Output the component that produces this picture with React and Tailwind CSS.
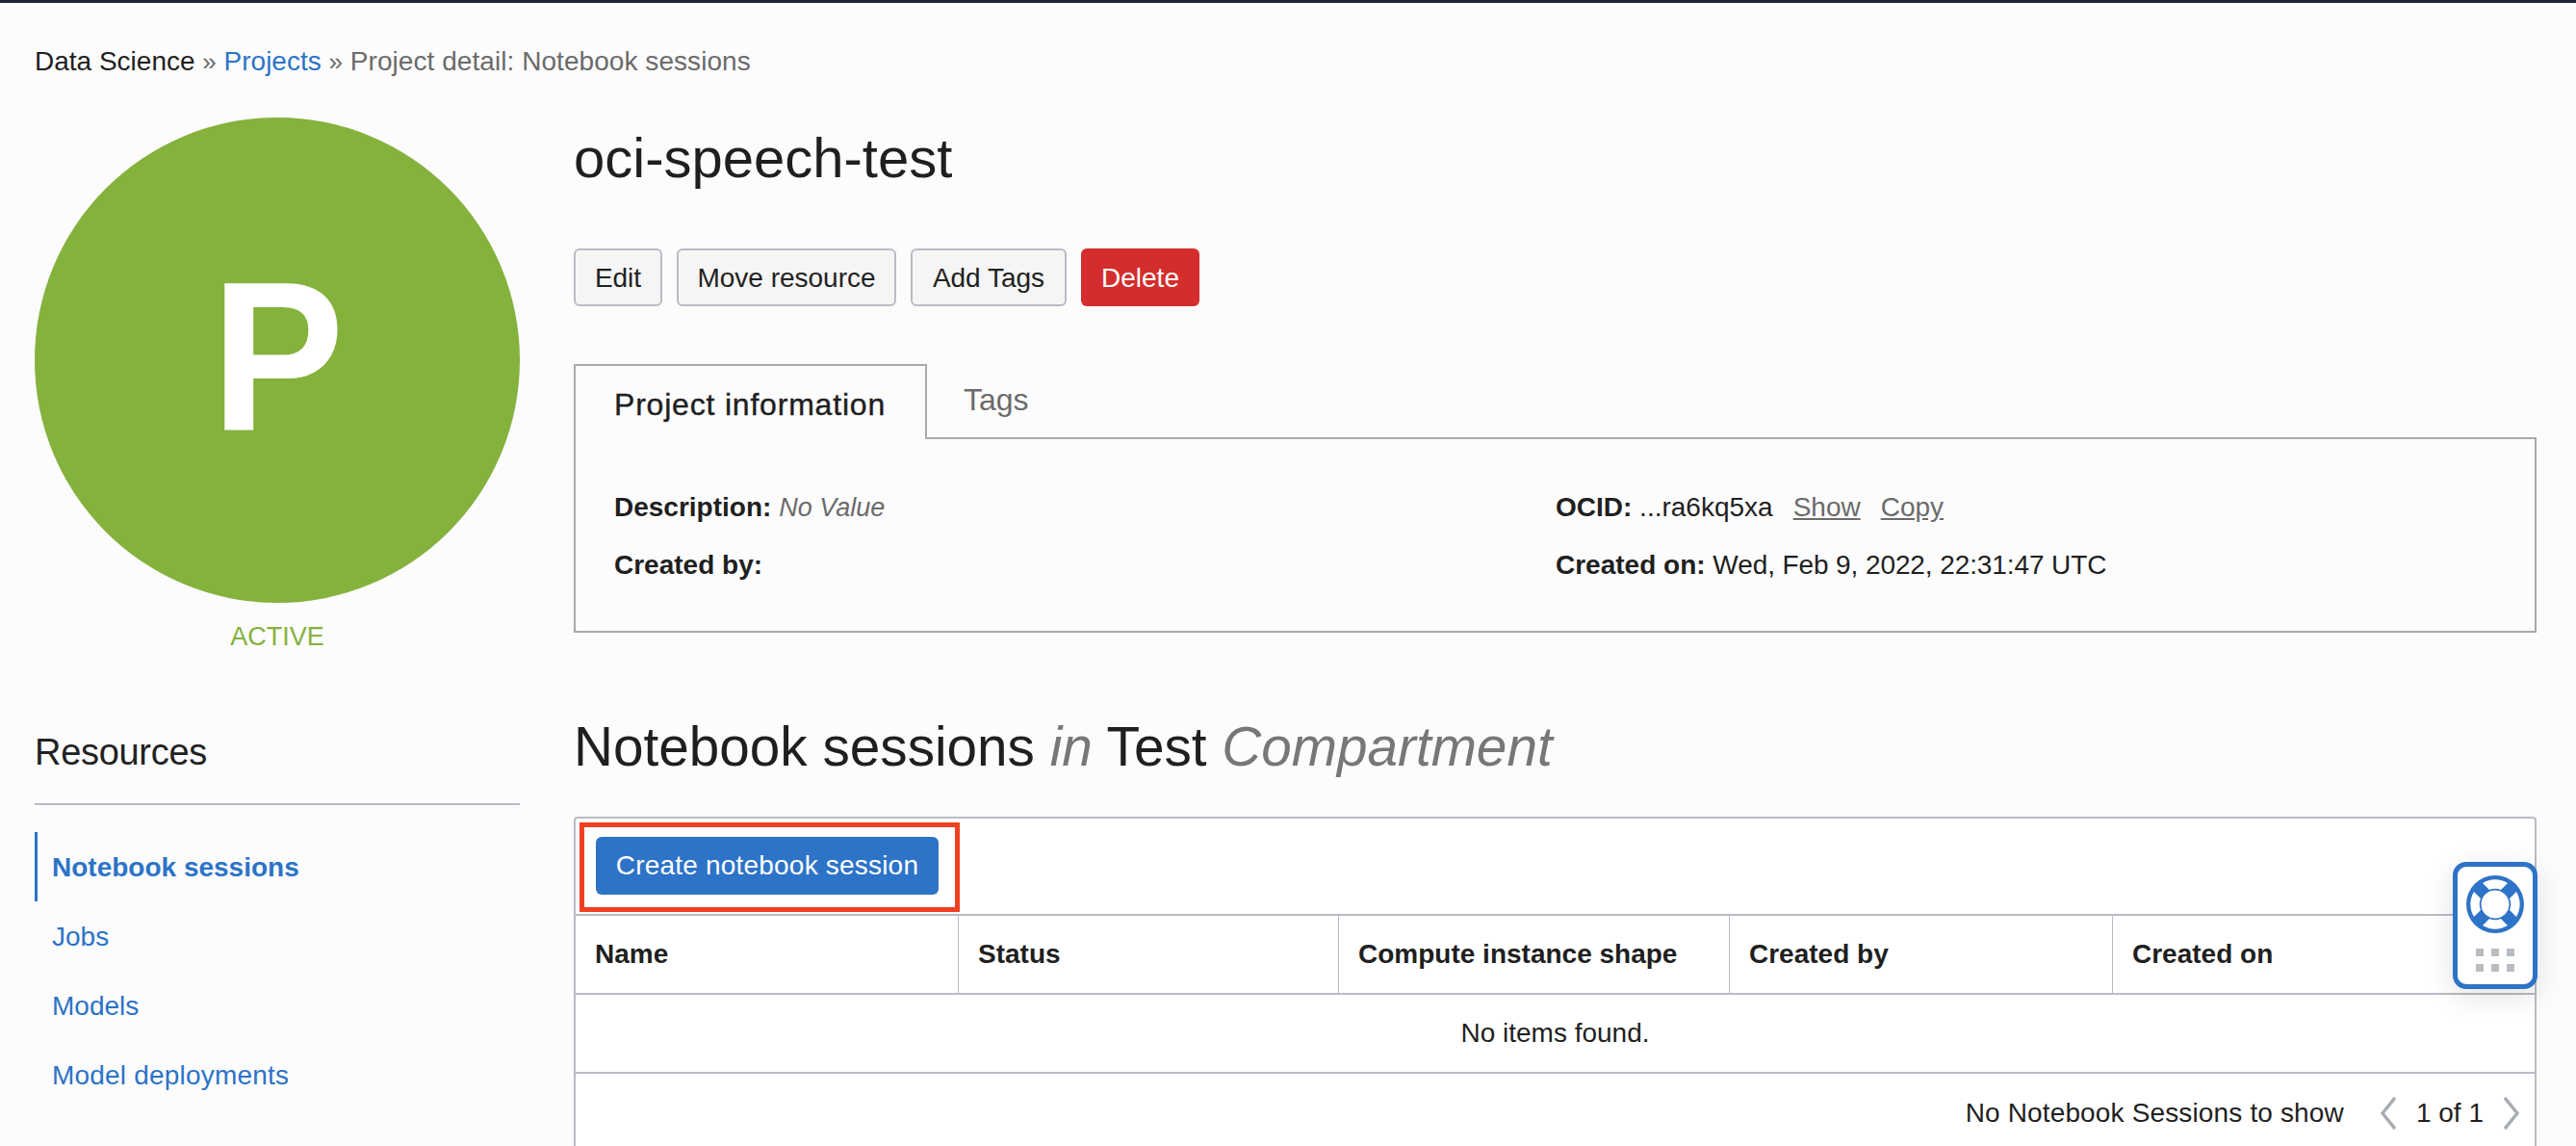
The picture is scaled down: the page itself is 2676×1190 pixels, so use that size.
export default function App() {
  const th = "px-[20px] flex items-center text-[28px] font-bold text-[#1f1f1f]";
  const lbl = "font-bold text-[#1f1f1f]";
  const btn = "h-[60px] pt-[2px] flex items-center justify-center rounded-[6px] border-2 border-[#b8bcc3] bg-[#f5f5f5] text-[28px] text-[#222]";
  return (
    <div className="w-full h-[1190px] overflow-hidden relative bg-[#fcfcfc] font-['Liberation_Sans',Arial,sans-serif] text-[#1f1f1f]">
      <div className="h-[3px] bg-[#1c2533]" />
      <div className="h-[119px] pl-[36px] pt-[43px] text-[28px] leading-[36px] text-[#6b6b6b] whitespace-nowrap">
        <span className="text-[#1f1f1f]">Data Science</span> <span className="text-[26px]">»</span> <span className="text-[#2d73c7]">Projects</span> <span className="text-[26px]">»</span> <span className="tracking-[0.06px]">Project detail: Notebook sessions</span>
      </div>
      <div className="flex pl-[36px] pr-[41px] gap-[56px]">
        <aside className="w-[504px] shrink-0">
          <div className="w-[504px] h-[504px] rounded-full bg-[#85b13d] flex items-center justify-center text-white text-[220px] font-bold leading-none">
            <span className="inline-block scale-x-[0.94] -translate-y-[3px]">P</span>
          </div>
          <div className="text-center text-[#85b13d] text-[27px] leading-[32px] mt-[19px]">ACTIVE</div>
          <div className="mt-[82px] text-[38px] leading-[44px] text-[#222] tracking-[-0.3px]">Resources</div>
          <div className="mt-[31px] h-[2px] bg-[#b8bcc3]" />
          <nav className="mt-[28px] text-[28px] text-[#2d73c7]">
            <div className="h-[72px] border-l-[3px] border-[#2d73c7] pl-[15px] pt-[2px] flex items-center font-bold">Notebook sessions</div>
            <div className="h-[72px] pl-[18px] pt-[2px] flex items-center">Jobs</div>
            <div className="h-[72px] pl-[18px] pt-[2px] flex items-center">Models</div>
            <div className="h-[72px] pl-[18px] pt-[2px] flex items-center tracking-[0.2px]">Model deployments</div>
          </nav>
        </aside>
        <main className="flex-1 min-w-0">
          <h1 className="h-[136px] pt-[8px] text-[58px] leading-[68px] text-[#1f1f1f] font-normal">oci-speech-test</h1>
          <div className="flex gap-[15px]">
            <div className={btn + " w-[92px]"}>Edit</div>
            <div className={btn + " w-[228px]"}>Move resource</div>
            <div className={btn + " w-[162px]"}>Add Tags</div>
            <div className="h-[60px] w-[123px] pt-[2px] flex items-center justify-center rounded-[6px] bg-[#d42d2d] text-[28px] text-white">Delete</div>
          </div>
          <div className="mt-[60px] h-[279px] relative">
            <div className="flex h-[78px]">
              <div className="w-[367px] border-2 border-b-0 border-[#aaaaaa] pl-[40px] pt-[22px] text-[32px] leading-[36px] tracking-[0.8px] [-webkit-text-stroke:0.4px_#1f1f1f] text-[#1f1f1f] z-10 bg-[#fcfcfc]">Project information</div>
              <div className="flex-1 border-b-2 border-[#aaaaaa] pl-[38px] pt-[19px] text-[32px] leading-[36px] text-[#6b6b6b]">Tags</div>
            </div>
            <div className="h-[202px] -mt-[1px] border-2 border-t-0 border-[#aaaaaa] pl-[40px] pt-[54px] flex text-[28px]">
              <div className="w-[978px] shrink-0">
                <div className="leading-[36px] h-[60px]"><span className={lbl}>Description:</span> <i className="text-[#6b6b6b] text-[27px]">No Value</i></div>
                <div className="leading-[36px]"><span className={lbl}>Created by:</span></div>
              </div>
              <div>
                <div className="leading-[36px] h-[60px] flex gap-[21px]"><span><span className={lbl}>OCID:</span> ...ra6kq5xa</span><span className="text-[#6b6b6b] underline">Show</span><span className="text-[#6b6b6b] underline">Copy</span></div>
                <div className="leading-[36px]"><span className={lbl}>Created on:</span> <span className="tracking-[-0.1px]">Wed, Feb 9, 2022, 22:31:47 UTC</span></div>
              </div>
            </div>
          </div>
          <h2 className="mt-[85px] h-[72px] text-[56.7px] leading-[68px] font-normal whitespace-nowrap">
            Notebook sessions <i className="text-[#777]">in</i> Test <i className="text-[#777]">Compartment</i>
          </h2>
          <section className="mt-[34px] border-x-2 border-t-2 border-[#b8bcc3] rounded-t-[4px] bg-white h-[400px]">
            <div className="h-[99px] pl-[4px] pt-[4px]">
              <div className="w-[395px] h-[93px] border-[5px] border-[#ee4022] pl-[12px] pt-[10px]">
                <div className="w-[356px] h-[60px] rounded-[6px] bg-[#2d73c7] text-white text-[28px] tracking-[0.2px] flex items-center justify-center">Create notebook session</div>
              </div>
            </div>
            <div className="grid grid-cols-[397px_395px_406px_398px_1fr] h-[84px] border-y-2 border-[#b8bcc3]">
              <div className={th}>Name</div>
              <div className={th + " border-l border-[#b8bcc3]"}>Status</div>
              <div className={th + " border-l border-[#b8bcc3]"}>Compute instance shape</div>
              <div className={th + " border-l border-[#b8bcc3]"}>Created by</div>
              <div className={th + " border-l border-[#b8bcc3]"}>Created on</div>
            </div>
            <div className="h-[82px] border-b-2 border-[#b8bcc3] flex items-center justify-center text-[28px]">No items found.</div>
            <div className="h-[82px] flex items-center justify-end pr-[16px] text-[28px]">
              <span className="tracking-[0.15px]">No Notebook Sessions to show</span>
              <svg className="ml-[38px]" width="17" height="34" viewBox="0 0 17 34" fill="none" stroke="#a9adb3" strokeWidth="3.5"><path d="M15 1 L2 17 L15 33" /></svg>
              <span className="ml-[20px]">1 of 1</span>
              <svg className="ml-[20px]" width="17" height="34" viewBox="0 0 17 34" fill="none" stroke="#a9adb3" strokeWidth="3.5"><path d="M2 1 L15 17 L2 33" /></svg>
            </div>
          </section>
        </main>
      </div>
      <div className="absolute left-[2548px] top-[895px] w-[88px] h-[132px] rounded-[14px] border-[5px] border-[#2d73c7] bg-white shadow-[0_8px_30px_rgba(0,0,0,0.12)] flex flex-col items-center">
        <svg className="mt-[9px]" width="60" height="60" viewBox="0 0 60 60">
          <circle cx="30" cy="30" r="30" fill="#2d73c7" />
          <g fill="#fff">
            <path d="M17 9 A25 25 0 0 1 43 9 L36 16 A15 15 0 0 0 24 16 Z" transform="translate(0 -1)" />
            <path d="M17 9 A25 25 0 0 1 43 9 L36 16 A15 15 0 0 0 24 16 Z" transform="rotate(90 30 30) translate(0 -1)" />
            <path d="M17 9 A25 25 0 0 1 43 9 L36 16 A15 15 0 0 0 24 16 Z" transform="rotate(180 30 30) translate(0 -1)" />
            <path d="M17 9 A25 25 0 0 1 43 9 L36 16 A15 15 0 0 0 24 16 Z" transform="rotate(270 30 30) translate(0 -1)" />
            <circle cx="30" cy="30" r="14.5" />
          </g>
        </svg>
        <div className="mt-[16px] grid grid-cols-3 gap-[8px]">
          {[0,1,2,3,4,5].map(i => <div key={i} className="w-[8px] h-[8px] bg-[#b8bcc3]" />)}
        </div>
      </div>
    </div>
  );
}
